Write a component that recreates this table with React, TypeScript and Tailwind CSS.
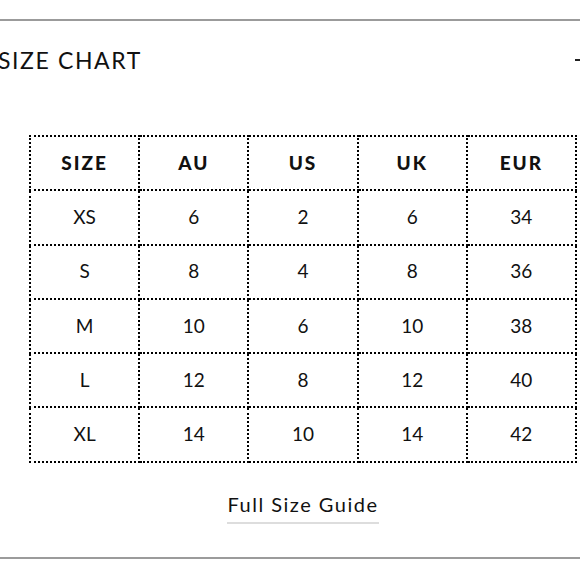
const headers = ['SIZE', 'AU', 'US', 'UK', 'EUR'];

const rows = [
  ['XS', '6', '2', '6', '34'],
  ['S', '8', '4', '8', '36'],
  ['M', '10', '6', '10', '38'],
  ['L', '12', '8', '12', '40'],
  ['XL', '14', '10', '14', '42'],
];

const App = () => {
  return (
    <div className="w-[580px] h-[580px] overflow-hidden bg-white text-[#111] font-['Lato','Liberation_Sans',sans-serif]">
      <div className="pt-[19px]">
        <div className="h-[2px] bg-[#9b9b9b]"></div>

        {/* heading */}
        <div className="h-[78px] flex items-center justify-between">
          <h1 className="-ml-[2px] text-[23px] tracking-[1.6px] font-normal leading-none">SIZE CHART</h1>
          <span className="w-[5px] h-[2px] bg-[#222]"></span>
        </div>

        <div className="ml-[29px] w-[548px] mt-[36px]">
          <table className="w-full border-collapse table-fixed">
            <thead>
              <tr>
                {headers.map((h) => (
                  <th
                    key={h}
                    className="h-[54.3px] border-2 border-dotted border-black text-[19px] font-black tracking-[2px] text-center"
                  >
                    {h}
                  </th>
                ))}
              </tr>
            </thead>
            <tbody>
              {rows.map((r) => (
                <tr key={r[0]}>
                  {r.map((c, i) => (
                    <td
                      key={i}
                      className="h-[54.3px] border-2 border-dotted border-black text-[19px] text-center"
                    >
                      {c}
                    </td>
                  ))}
                </tr>
              ))}
            </tbody>
          </table>

          <div className="flex justify-center mt-[31px]">
            <a className="text-[20px] tracking-[1.5px] pb-[8px] border-b-2 border-[#dddddd] leading-none">Full Size Guide</a>
          </div>
        </div>

        <div className="mt-[33px] h-[2px] bg-[#9b9b9b]"></div>
      </div>
    </div>
  );
};

export default App;
